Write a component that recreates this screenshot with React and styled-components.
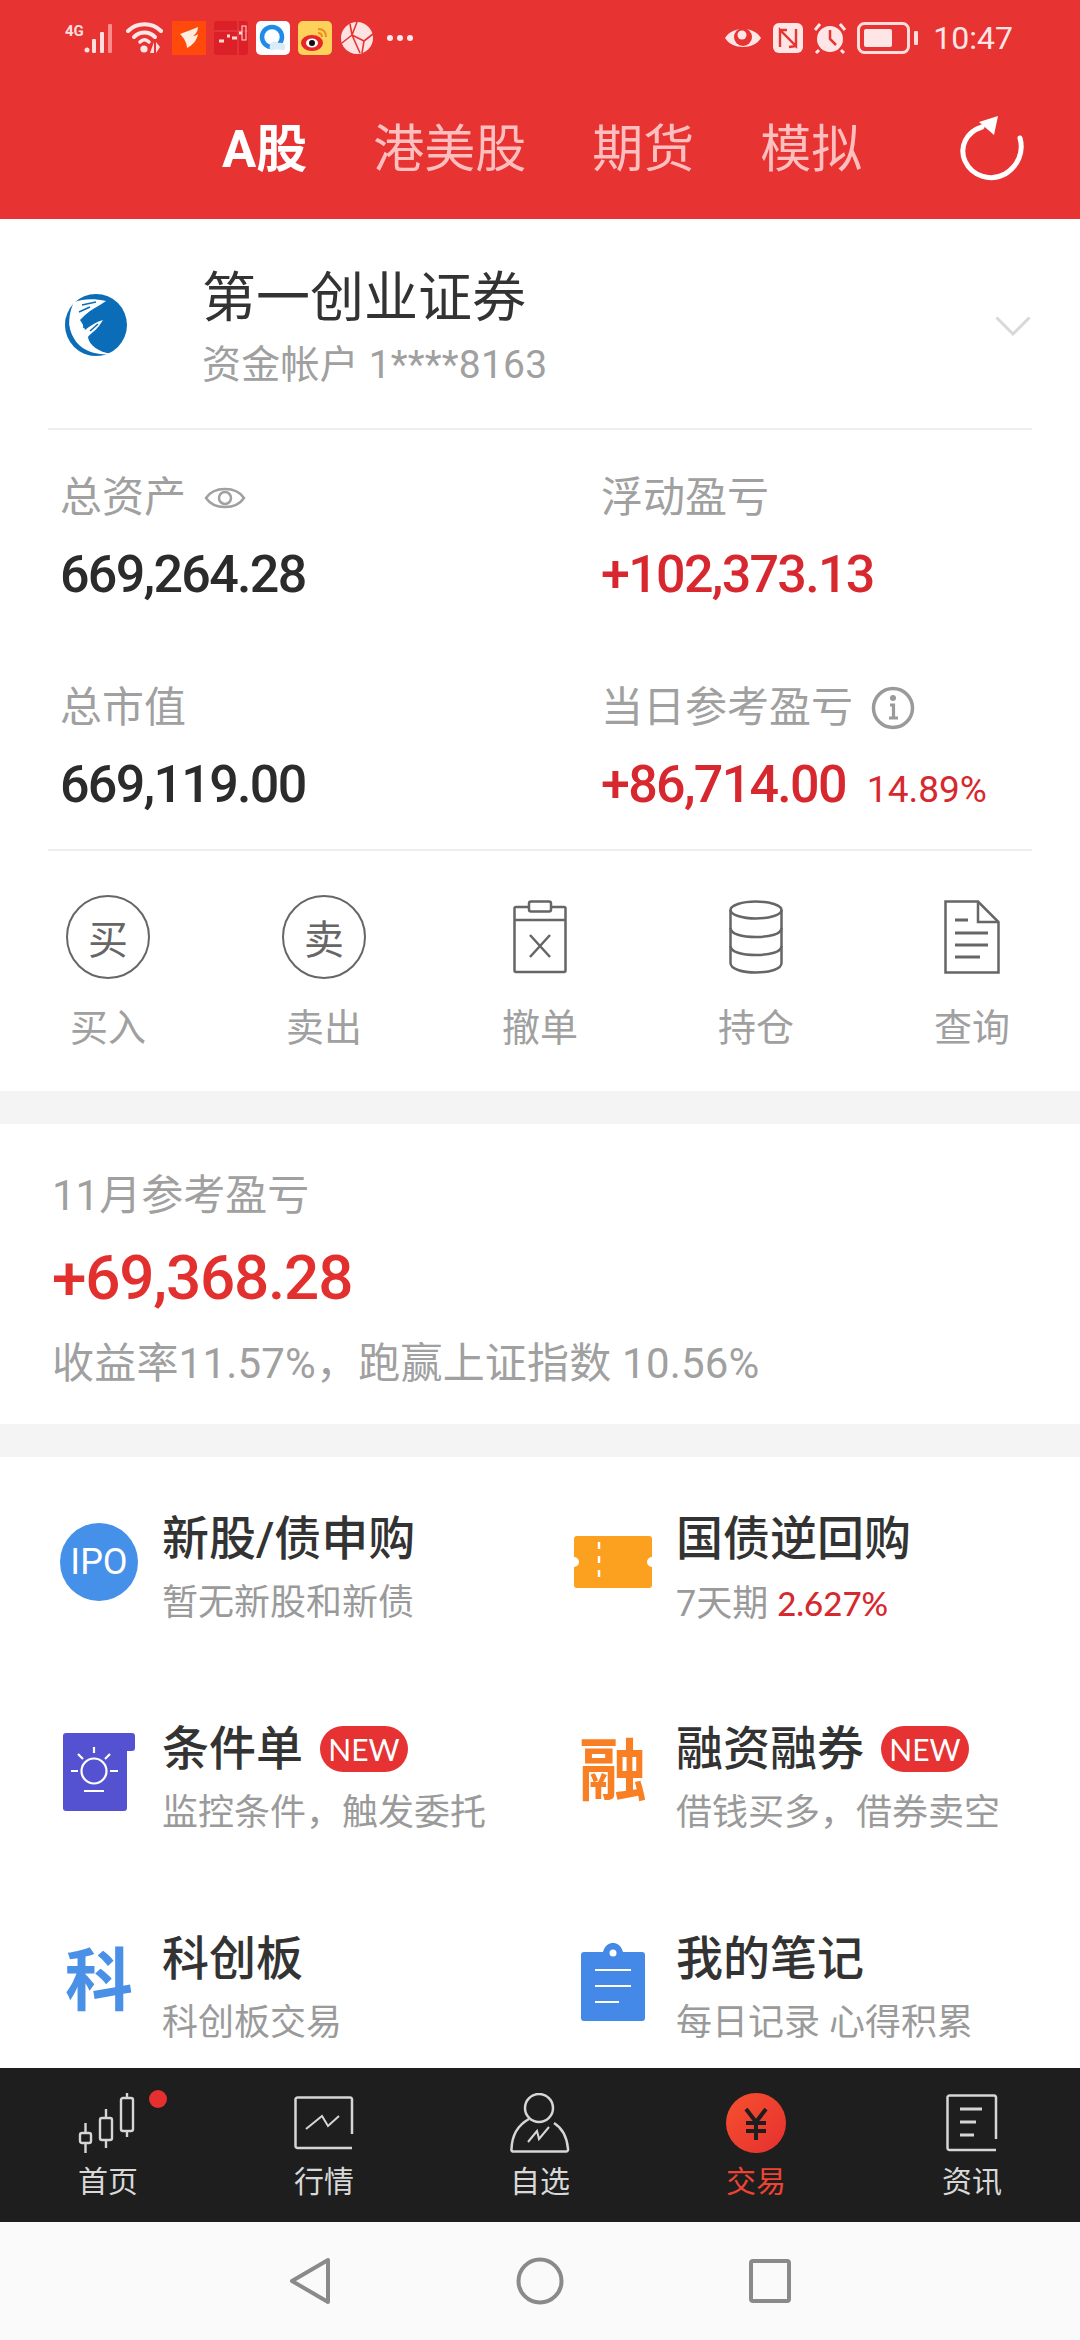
import React from "react";
import styled, { createGlobalStyle } from "styled-components";

const Global = createGlobalStyle`
  html, body {
    margin: 0;
    padding: 0;
    background: #fff;
  }
  * {
    box-sizing: border-box;
  }
  body {
    font-family: Roboto, "Noto Sans CJK SC", sans-serif;
  }
`;

const tabs = ["A股", "港美股", "期货", "模拟"];

const StatusIcons = () => (
  <StatusGroup>
    <FourG>4G</FourG>
    <svg width="34" height="32" viewBox="0 0 34 32">
      <circle cx="3" cy="28" r="2.5" fill="#ffdede" />
      <rect x="8" y="17" width="4" height="14" rx="1" fill="#ffdede" />
      <rect x="16" y="10" width="4" height="21" rx="1" fill="#ffdede" />
      <rect x="24" y="2" width="4" height="29" rx="1" fill="#ff8a8a" />
    </svg>
    <svg width="38" height="34" viewBox="0 0 38 34" fill="none">
      <path d="M2 10 C11 1 26 1 35 10" stroke="#ffe6e6" strokeWidth="4" strokeLinecap="round" />
      <path d="M8 16 C14 10 23 10 29 16" stroke="#ffe6e6" strokeWidth="4" strokeLinecap="round" />
      <path d="M14 21 C17 18 20 18 23 21" stroke="#ffe6e6" strokeWidth="3.5" strokeLinecap="round" />
      <circle cx="18" cy="28" r="3.6" fill="#ffe6e6" />
      <path d="M28 21 L28 32 L24 32 Z M30 21 L30 32 L34 26 Z" fill="#ffdede" />
    </svg>
    <AppTiles>
      <svg width="34" height="34" viewBox="0 0 34 34">
        <rect width="34" height="34" fill="#ff4a0c" />
        <path d="M8 13 C14 11 21 8 26 6 C26 10 24 13 21 15 C23 15 25 14 26 13 C25 19 21 24 15 27 C15 22 12 17 8 13 Z" fill="#ffeee0" />
      </svg>
      <svg width="34" height="34" viewBox="0 0 34 34">
        <rect width="34" height="34" rx="3" fill="#db2028" />
        <path d="M0 10 H34 M24 0 V34" stroke="#f05a5a" strokeWidth="0.7" />
        <path d="M5 20 H10 M13 15 H16 M18 17 H23 M25 12 H28" stroke="#ffd9d9" strokeWidth="3" />
        <rect x="28" y="5" width="4" height="14" fill="none" stroke="#ffd9d9" strokeWidth="1" />
      </svg>
      <svg width="34" height="34" viewBox="0 0 34 34" fill="none">
        <rect width="34" height="34" rx="5" fill="#fbfdff" />
        <circle cx="16" cy="16" r="10" stroke="#1f8ae8" strokeWidth="4.5" />
        <path d="M14 28 C12 22 19 18 23 22 C28 21 31 25 28 29 Z" fill="#d9ebf8" />
      </svg>
      <svg width="34" height="34" viewBox="0 0 34 34" fill="none">
        <rect width="34" height="34" rx="5" fill="#fdd25a" />
        <ellipse cx="14" cy="22" rx="11" ry="8" fill="#e8262a" />
        <ellipse cx="14" cy="22" rx="6" ry="4.5" fill="#fff" />
        <circle cx="14" cy="22" r="3" fill="#111" />
        <path d="M20 8 C25 8 28 11 28 16 M20 12 C22.500 12 24 13.500 24 16" stroke="#f08b1d" strokeWidth="2" />
      </svg>
      <svg width="34" height="34" viewBox="0 0 34 34" fill="none">
        <circle cx="17" cy="17" r="16" fill="#ffe3e3" />
        <path d="M17 1 L12 14 L24 20 L22 32 M12 14 L2 22 M24 20 L33 13 M12 14 L10 3 M12 14 L20 32" stroke="#e83333" strokeWidth="1.6" />
      </svg>
    </AppTiles>
    <Dots>
      <i />
      <i />
      <i />
    </Dots>
  </StatusGroup>
);

const SystemIcons = () => (
  <StatusGroup $gap={10}>
    <svg width="40" height="30" viewBox="0 0 40 30" fill="none">
      <path d="M2 15 C9 3 31 3 38 15 C31 27 9 27 2 15 Z" fill="#ffe6e6" />
      <circle cx="20" cy="14" r="9" fill="#e83333" />
      <circle cx="19" cy="12" r="4.500" fill="#ffe6e6" />
    </svg>
    <svg width="30" height="30" viewBox="0 0 30 30">
      <rect width="30" height="30" rx="6" fill="#ffe6e6" />
      <path d="M7 24 V7 L23 23 V6 M7 7 L14 7 M16 24 L23 23" stroke="#e83333" strokeWidth="2.400" fill="none" />
    </svg>
    <svg width="34" height="32" viewBox="0 0 34 32" fill="none">
      <circle cx="17" cy="17" r="13" fill="#ffe6e6" />
      <path d="M17 8 V17 L23 23" stroke="#e83333" strokeWidth="2.500" />
      <path d="M2 8 L7 2 M32 8 L27 2 M6 28 L3 31 M28 28 L31 31" stroke="#ffe6e6" strokeWidth="3" />
    </svg>
    <svg width="62" height="32" viewBox="0 0 62 32" fill="none">
      <rect x="1.500" y="1.500" width="50" height="29" rx="6" stroke="#ffdcdc" strokeWidth="3" />
      <rect x="7" y="7" width="28" height="18" rx="2" fill="#ffe6e6" />
      <rect x="57" y="9" width="4" height="14" rx="1" fill="#ffdcdc" />
    </svg>
    <Clock>10:47</Clock>
  </StatusGroup>
);

const RefreshIcon = () => (
  <svg width="64" height="68" viewBox="0 0 64 68" fill="none">
    <path d="M60 24 C64 38 58 52 45 60 C30 68 12 62 5 47 C-1 33 6 18 22 13" stroke="#fff" strokeWidth="5" strokeLinecap="round" />
    <path d="M19 8 L38 2 L34 21 Z" fill="#fff" />
  </svg>
);

const BrokerLogo = () => (
  <svg width="66" height="64" viewBox="0 0 66 64">
    <circle cx="34" cy="32" r="31" fill="#0b6db7" />
    <path d="M12 9 C20 6 32 5 44 8 L38 12 C32 15 24 20 18 27 C20 30 22 33 23 37 C28 33 34 29 41 27 L37 33 C33 38 28 41 26 44 C27 52 36 59 50 61 C32 63 14 56 8 38 C6 28 8 17 12 9 Z" fill="#fff" />
    <path d="M20 12 L34 9 M17 19 L28 14 M22 35 L22 24 M28 38 L36 31" stroke="#0b6db7" strokeWidth="1.600" />
    <path d="M4 24 C1 42 12 60 34 63 C18 58 7 44 6 24 Z" fill="#0b6db7" />
  </svg>
);

const EyeIcon = () => (
  <svg width="42" height="28" viewBox="0 0 42 28" fill="none" stroke="#a0a0a0" strokeWidth="2.500">
    <path d="M2 14 C10 2 32 2 40 14 C32 26 10 26 2 14 Z" />
    <circle cx="21" cy="14" r="6" />
  </svg>
);

const InfoIcon = () => (
  <svg width="44" height="44" viewBox="0 0 44 44" fill="none" stroke="#9a9a9a">
    <circle cx="22" cy="22" r="19.500" strokeWidth="3.500" />
    <circle cx="22" cy="12" r="3" fill="#9a9a9a" stroke="none" />
    <path d="M19 19 H22.500 V32 M18 32 H27" strokeWidth="3.200" />
  </svg>
);

const ClipboardIcon = () => (
  <svg width="54" height="74" viewBox="0 0 54 74" fill="none" stroke="#666" strokeWidth="2.500">
    <rect x="1.500" y="7" width="51" height="65" rx="1.500" />
    <rect x="16" y="1.500" width="22" height="10" rx="2" fill="#fff" />
    <path d="M1.500 20 H52.500" />
    <path d="M17 35 L37 57 M37 35 L17 57" />
  </svg>
);

const DatabaseIcon = () => (
  <svg width="54" height="74" viewBox="0 0 54 74" fill="none" stroke="#666" strokeWidth="2.500">
    <ellipse cx="27" cy="10" rx="25.500" ry="8.500" />
    <path d="M1.500 10 V63 C1.500 69 13 72.500 27 72.500 C41 72.500 52.500 69 52.500 63 V10" />
    <path d="M1.500 28 C1.500 34 13 37 27 37 C41 37 52.500 34 52.500 28" />
    <path d="M1.500 46 C1.500 52 13 55 27 55 C41 55 52.500 52 52.500 46" />
  </svg>
);

const DocIcon = () => (
  <svg width="56" height="74" viewBox="0 0 56 74" fill="none" stroke="#666" strokeWidth="2.500">
    <path d="M1.500 1.500 H34 L54.500 22 V72.500 H1.500 Z" />
    <path d="M34 1.500 V22 H54.500" />
    <path d="M11 20 H24 M11 33 H44 M11 45 H44 M11 57 H36" strokeWidth="3" />
  </svg>
);

const TicketIcon = () => (
  <svg width="78" height="52" viewBox="0 0 78 52">
    <path d="M3 0 H75 A3 3 0 0 1 78 3 V21 A5 5 0 0 0 78 31 V49 A3 3 0 0 1 75 52 H3 A3 3 0 0 1 0 49 V31 A5 5 0 0 0 0 21 V3 A3 3 0 0 1 3 0 Z" fill="#fba01f" />
    <path d="M25 6 V46" stroke="#fff" strokeWidth="2.500" strokeDasharray="7 7" />
  </svg>
);

const BulbIcon = () => (
  <svg width="72" height="78" viewBox="0 0 72 78">
    <path d="M3 0 H69 A3 3 0 0 1 72 3 V15 A3 3 0 0 1 69 18 H64 V75 A3 3 0 0 1 61 78 H3 A3 3 0 0 1 0 75 V3 A3 3 0 0 1 3 0 Z" fill="#5552d1" />
    <g fill="none" stroke="#fff" strokeWidth="2.200">
      <circle cx="31" cy="38" r="12.500" />
      <path d="M31 14 V20 M15 21 L20 26 M47 21 L42 26 M8 38 H15 M47 38 H55 M21 58 H41" />
    </g>
  </svg>
);

const NoteIcon = () => (
  <svg width="64" height="78" viewBox="0 0 64 78">
    <path d="M3 9 H22 C24 2 28 0 32 0 C36 0 40 2 42 9 H61 A3 3 0 0 1 64 12 V75 A3 3 0 0 1 61 78 H3 A3 3 0 0 1 0 75 V12 A3 3 0 0 1 3 9 Z" fill="#4589e8" />
    <circle cx="32" cy="10" r="3.500" fill="#fff" />
    <path d="M14 27 H50 M14 43 H50 M14 59 H38" stroke="#fff" strokeWidth="2.200" />
  </svg>
);

const HomeIcon = () => (
  <svg width="60" height="60" viewBox="0 0 60 60" fill="none" stroke="#d6d6d6" strokeWidth="2.400">
    <rect x="2" y="40" width="11" height="10" rx="2" />
    <path d="M7.500 30 V40 M7.500 50 V60" />
    <rect x="22" y="25" width="12" height="22" rx="2" />
    <path d="M28 16 V25 M28 47 V55" />
    <rect x="43" y="5" width="12" height="33" rx="2" />
    <path d="M49 0 V5 M49 38 V44" />
  </svg>
);

const ChartIcon = () => (
  <svg width="60" height="54" viewBox="0 0 60 54" fill="none" stroke="#d6d6d6" strokeWidth="2.500">
    <path d="M58 38 V3 A2 2 0 0 0 56 1.500 H4 A2 2 0 0 0 1.500 3 V50 A2 2 0 0 0 4 52 H58" />
    <path d="M12 33 L28 20 L34 30 L45 20" strokeWidth="2" />
  </svg>
);

const PersonIcon = () => (
  <svg width="60" height="60" viewBox="0 0 60 60" fill="none" stroke="#d6d6d6" strokeWidth="2.500">
    <ellipse cx="29" cy="15" rx="14" ry="14" />
    <path d="M19 26 C8 32 2 42 1.500 56 A2 2 0 0 0 4 58.500 H56 A2 2 0 0 0 58 56 C57 44 52 35 44 30" />
    <path d="M18 49 L27 38 L29 46 L39 34" strokeWidth="2" />
  </svg>
);

const YenIcon = () => (
  <svg width="60" height="60" viewBox="0 0 60 60">
    <defs>
      <linearGradient id="yen" x1="0" y1="0" x2="1" y2="1">
        <stop offset="0" stopColor="#f6502f" />
        <stop offset="1" stopColor="#e5302f" />
      </linearGradient>
    </defs>
    <circle cx="30" cy="30" r="30" fill="url(#yen)" />
    <path d="M20 16 L30 29 L40 16 M20 30 H40 M20 38 H40 M30 29 V47" fill="none" stroke="#1e1e1e" strokeWidth="4" />
  </svg>
);

const NewsIcon = () => (
  <svg width="52" height="58" viewBox="0 0 52 58" fill="none" stroke="#d6d6d6" strokeWidth="2.500">
    <path d="M50 45 V3 A2 2 0 0 0 48 1.500 H4 A2 2 0 0 0 1.500 3 V54 A2 2 0 0 0 4 56 H50" />
    <path d="M14 15 H36 M14 28 H30 M14 41 H28" strokeWidth="3" />
  </svg>
);

export default function App() {
  return (
    <Page>
      <Global />
      <Header>
        <StatusBar>
          <StatusIcons />
          <SystemIcons />
        </StatusBar>
        <TabRow>
          <Tabs>
            {tabs.map((t, i) => (
              <TabItem key={t} $active={i === 0}>
                {t}
              </TabItem>
            ))}
          </Tabs>
          <RefreshWrap>
            <RefreshIcon />
          </RefreshWrap>
        </TabRow>
      </Header>

      <Content>
        <WhiteCard>
          <Account>
            <LogoSlot>
              <BrokerLogo />
            </LogoSlot>
            <AccountText>
              <BrokerName>第一创业证券</BrokerName>
              <AccountNo>资金帐户 1****8163</AccountNo>
            </AccountText>
            <Chevron width="36" height="20" viewBox="0 0 36 20" fill="none">
              <path d="M1.500 1.500 L18 18 L34.500 1.500" stroke="#d8d8d8" strokeWidth="3" />
            </Chevron>
          </Account>

          <Stats>
            <Stat>
              <StatLabel>
                总资产
                <EyeIcon />
              </StatLabel>
              <StatValue>669,264.28</StatValue>
            </Stat>
            <Stat>
              <StatLabel>浮动盈亏</StatLabel>
              <StatValue $red>+102,373.13</StatValue>
            </Stat>
            <Stat>
              <StatLabel>总市值</StatLabel>
              <StatValue>669,119.00</StatValue>
            </Stat>
            <Stat>
              <StatLabel>
                当日参考盈亏
                <InfoIcon />
              </StatLabel>
              <StatValue $red>
                +86,714.00<Percent>14.89%</Percent>
              </StatValue>
            </Stat>
          </Stats>

          <Actions>
            <Action>
              <ActionIcon>
                <CircleGlyph>买</CircleGlyph>
              </ActionIcon>
              <ActionLabel>买入</ActionLabel>
            </Action>
            <Action>
              <ActionIcon>
                <CircleGlyph>卖</CircleGlyph>
              </ActionIcon>
              <ActionLabel>卖出</ActionLabel>
            </Action>
            <Action>
              <ActionIcon>
                <ClipboardIcon />
              </ActionIcon>
              <ActionLabel>撤单</ActionLabel>
            </Action>
            <Action>
              <ActionIcon>
                <DatabaseIcon />
              </ActionIcon>
              <ActionLabel>持仓</ActionLabel>
            </Action>
            <Action>
              <ActionIcon>
                <DocIcon />
              </ActionIcon>
              <ActionLabel>查询</ActionLabel>
            </Action>
          </Actions>
        </WhiteCard>

        <Band />

        <Monthly>
          <MonthLabel>11月参考盈亏</MonthLabel>
          <MonthValue>+69,368.28</MonthValue>
          <MonthNote>收益率11.57%，跑赢上证指数 10.56%</MonthNote>
        </Monthly>

        <Band />

        <Services>
          <Service>
            <ServiceIcon>
              <IpoBadge>IPO</IpoBadge>
            </ServiceIcon>
            <div>
              <ServiceTitle>新股/债申购</ServiceTitle>
              <ServiceSub>暂无新股和新债</ServiceSub>
            </div>
          </Service>
          <Service>
            <ServiceIcon>
              <TicketIcon />
            </ServiceIcon>
            <div>
              <ServiceTitle>国债逆回购</ServiceTitle>
              <ServiceSub>
                7天期 <Rate>2.627%</Rate>
              </ServiceSub>
            </div>
          </Service>
          <Service>
            <ServiceIcon>
              <BulbIcon />
            </ServiceIcon>
            <div>
              <ServiceTitle>
                条件单<NewTag>NEW</NewTag>
              </ServiceTitle>
              <ServiceSub>监控条件，触发委托</ServiceSub>
            </div>
          </Service>
          <Service>
            <ServiceIcon>
              <BigGlyph $color="#f97f24">融</BigGlyph>
            </ServiceIcon>
            <div>
              <ServiceTitle>
                融资融券<NewTag>NEW</NewTag>
              </ServiceTitle>
              <ServiceSub>借钱买多，借券卖空</ServiceSub>
            </div>
          </Service>
          <Service>
            <ServiceIcon>
              <BigGlyph $color="#4a90e6">科</BigGlyph>
            </ServiceIcon>
            <div>
              <ServiceTitle>科创板</ServiceTitle>
              <ServiceSub>科创板交易</ServiceSub>
            </div>
          </Service>
          <Service>
            <ServiceIcon>
              <NoteIcon />
            </ServiceIcon>
            <div>
              <ServiceTitle>我的笔记</ServiceTitle>
              <ServiceSub>每日记录 心得积累</ServiceSub>
            </div>
          </Service>
        </Services>
      </Content>

      <TabBar>
        <BarItem>
          <BarIcon>
            <HomeIcon />
            <RedDot />
          </BarIcon>
          <BarLabel>首页</BarLabel>
        </BarItem>
        <BarItem>
          <BarIcon>
            <ChartIcon />
          </BarIcon>
          <BarLabel>行情</BarLabel>
        </BarItem>
        <BarItem>
          <BarIcon>
            <PersonIcon />
          </BarIcon>
          <BarLabel>自选</BarLabel>
        </BarItem>
        <BarItem>
          <BarIcon>
            <YenIcon />
          </BarIcon>
          <BarLabel $active>交易</BarLabel>
        </BarItem>
        <BarItem>
          <BarIcon>
            <NewsIcon />
          </BarIcon>
          <BarLabel>资讯</BarLabel>
        </BarItem>
      </TabBar>

      <NavBar>
        <svg width="42" height="48" viewBox="0 0 42 48" fill="none">
          <path d="M39 3 V45 L3 24 Z" stroke="#8a8a8a" strokeWidth="4" strokeLinejoin="round" />
        </svg>
        <svg width="48" height="48" viewBox="0 0 48 48" fill="none">
          <circle cx="24" cy="24" r="21.500" stroke="#8a8a8a" strokeWidth="4" />
        </svg>
        <svg width="42" height="44" viewBox="0 0 42 44" fill="none">
          <rect x="2" y="2" width="38" height="40" rx="2" stroke="#8a8a8a" strokeWidth="4" />
        </svg>
      </NavBar>
    </Page>
  );
}

const Page = styled.div`
  width: 1080px;
  height: 2340px;
  display: flex;
  flex-direction: column;
  overflow: hidden;
  background: #fff;
`;
const Header = styled.header`
  height: 219px;
  flex: none;
  background: #e83333;
  display: flex;
  flex-direction: column;
`;
const StatusBar = styled.div`
  height: 76px;
  padding: 0 67px 0 65px;
  display: flex;
  justify-content: space-between;
  align-items: center;
`;
const StatusGroup = styled.div`
  display: flex;
  align-items: center;
  gap: ${(p) => p.$gap || 8}px;
`;
const FourG = styled.span`
  font-size: 15px;
  font-weight: 700;
  color: #ffdede;
  margin: -14px -8px 0 0;
`;
const AppTiles = styled.div`
  display: flex;
  gap: 8px;
`;
const Dots = styled.div`
  display: flex;
  gap: 4px;
  margin-left: 5px;
  i {
    width: 6px;
    height: 6px;
    border-radius: 50%;
    background: #ffe6e6;
  }
`;
const Clock = styled.span`
  font-size: 32px;
  color: #ffe6e6;
  margin-left: 4px;
`;
const TabRow = styled.div`
  flex: 1;
  display: flex;
  align-items: center;
  padding: 4px 56px 0 222px;
  justify-content: space-between;
`;
const Tabs = styled.nav`
  display: flex;
  gap: 66px;
`;
const TabItem = styled.span`
  font-size: 51px;
  line-height: 60px;
  font-weight: ${(p) => (p.$active ? 700 : 400)};
  color: ${(p) => (p.$active ? "#fff" : "#ffbfbf")};
`;
const RefreshWrap = styled.div`
  display: flex;
  margin-bottom: 4px;
`;
const Content = styled.main`
  flex: 1;
  min-height: 0;
  overflow: hidden;
`;
const WhiteCard = styled.section`
  height: 872px;
  display: flex;
  flex-direction: column;
`;
const Account = styled.div`
  height: 211px;
  margin: 0 48px;
  border-bottom: 2px solid #eeeeee;
  display: flex;
  align-items: center;
`;
const LogoSlot = styled.div`
  width: 154px;
  display: flex;
  padding-left: 14px;
  margin-top: 2px;
`;
const AccountText = styled.div`
  flex: 1;
  padding-top: 6px;
`;
const BrokerName = styled.div`
  font-size: 54px;
  line-height: 72px;
  color: #333;
`;
const AccountNo = styled.div`
  font-size: 39px;
  line-height: 50px;
  color: #a0a0a0;
  margin-top: 5px;
  letter-spacing: 0.2px;
`;
const Chevron = styled.svg`
  margin: 5px 1px 0 0;
`;
const Stats = styled.div`
  margin: 0 48px;
  height: 421px;
  padding: 43px 0 0 12px;
  border-bottom: 2px solid #eeeeee;
  display: grid;
  grid-template-columns: 541px 1fr;
  grid-auto-rows: 210px;
`;
const Stat = styled.div`
  display: flex;
  flex-direction: column;
`;
const StatLabel = styled.div`
  font-size: 42px;
  line-height: 50px;
  color: #a0a0a0;
  display: flex;
  align-items: center;
  gap: 18px;
`;
const StatValue = styled.div`
  font-size: 52px;
  font-weight: 500;
  line-height: 60px;
  margin-top: 22px;
  letter-spacing: -1.700px;
  color: ${(p) => (p.$red ? "#d8282f" : "#2b2b2b")};
`;
const Percent = styled.span`
  font-size: 37px;
  font-weight: 400;
  letter-spacing: 0;
  margin-left: 21px;
`;
const Actions = styled.div`
  flex: 1;
  display: grid;
  grid-template-columns: repeat(5, 216px);
  padding-top: 44px;
`;
const Action = styled.div`
  display: flex;
  flex-direction: column;
  align-items: center;
`;
const ActionIcon = styled.div`
  height: 84px;
  display: flex;
  align-items: center;
  justify-content: center;
`;
const CircleGlyph = styled.div`
  width: 84px;
  height: 84px;
  border: 2.500px solid #666;
  border-radius: 50%;
  display: flex;
  align-items: center;
  justify-content: center;
  font-size: 40px;
  color: #666;
`;
const ActionLabel = styled.div`
  font-size: 38px;
  line-height: 50px;
  color: #a0a0a0;
  margin-top: 24px;
`;
const Band = styled.div`
  height: 33px;
  background: #f4f4f4;
`;
const Monthly = styled.section`
  height: 300px;
  padding: 47px 52px 0;
`;
const MonthLabel = styled.div`
  font-size: 42px;
  line-height: 50px;
  color: #a0a0a0;
`;
const MonthValue = styled.div`
  font-size: 62px;
  line-height: 80px;
  font-weight: 500;
  letter-spacing: -1.200px;
  color: #e2302f;
  margin-top: 17px;
`;
const MonthNote = styled.div`
  font-size: 42px;
  line-height: 50px;
  letter-spacing: 0.2px;
  color: #a0a0a0;
  margin-top: 21px;
`;
const Services = styled.section`
  padding: 52px 0 0 60px;
  display: grid;
  grid-template-columns: 514px 1fr;
  grid-auto-rows: 116px;
  row-gap: 94px;
`;
const Service = styled.div`
  display: flex;
  align-items: center;
  gap: 24px;
`;
const ServiceIcon = styled.div`
  width: 78px;
  height: 78px;
  flex: none;
  display: flex;
  align-items: center;
  justify-content: center;
  margin-bottom: 10px;
`;
const IpoBadge = styled.div`
  width: 78px;
  height: 78px;
  border-radius: 50%;
  background: #4590e8;
  color: #fff;
  font-size: 36px;
  display: flex;
  align-items: center;
  justify-content: center;
`;
const BigGlyph = styled.div`
  font-size: 68px;
  line-height: 78px;
  font-weight: 700;
  color: ${(p) => p.$color};
`;
const ServiceTitle = styled.div`
  font-size: 47px;
  line-height: 60px;
  font-weight: 500;
  color: #333;
  display: flex;
  align-items: center;
`;
const NewTag = styled.span`
  width: 88px;
  height: 46px;
  margin-left: 17px;
  border-radius: 23px;
  background: #e63232;
  color: #fff;
  font-family: Lato, sans-serif;
  font-size: 30px;
  font-weight: 400;
  display: flex;
  align-items: center;
  justify-content: center;
`;
const ServiceSub = styled.div`
  font-size: 36px;
  line-height: 44px;
  color: #9a9a9a;
  margin-top: 12px;
`;
const Rate = styled.span`
  color: #d8282f;
  font-family: Lato, sans-serif;
  font-size: 33px;
  font-weight: 500;
`;
const TabBar = styled.footer`
  height: 154px;
  flex: none;
  background: #1e1e1e;
  display: grid;
  grid-template-columns: repeat(5, 216px);
  padding-top: 25px;
`;
const BarItem = styled.div`
  display: flex;
  flex-direction: column;
  align-items: center;
`;
const BarIcon = styled.div`
  position: relative;
  height: 60px;
  display: flex;
  align-items: center;
`;
const RedDot = styled.span`
  position: absolute;
  right: -29px;
  top: -3px;
  width: 18px;
  height: 18px;
  border-radius: 50%;
  background: #e6302f;
`;
const BarLabel = styled.div`
  font-size: 30px;
  line-height: 36px;
  margin-top: 11px;
  color: ${(p) => (p.$active ? "#ee4434" : "#d8d8d8")};
`;
const NavBar = styled.div`
  height: 118px;
  flex: none;
  background: #fafafa;
  display: flex;
  align-items: center;
  padding-left: 289px;
  gap: 185px;
`;
